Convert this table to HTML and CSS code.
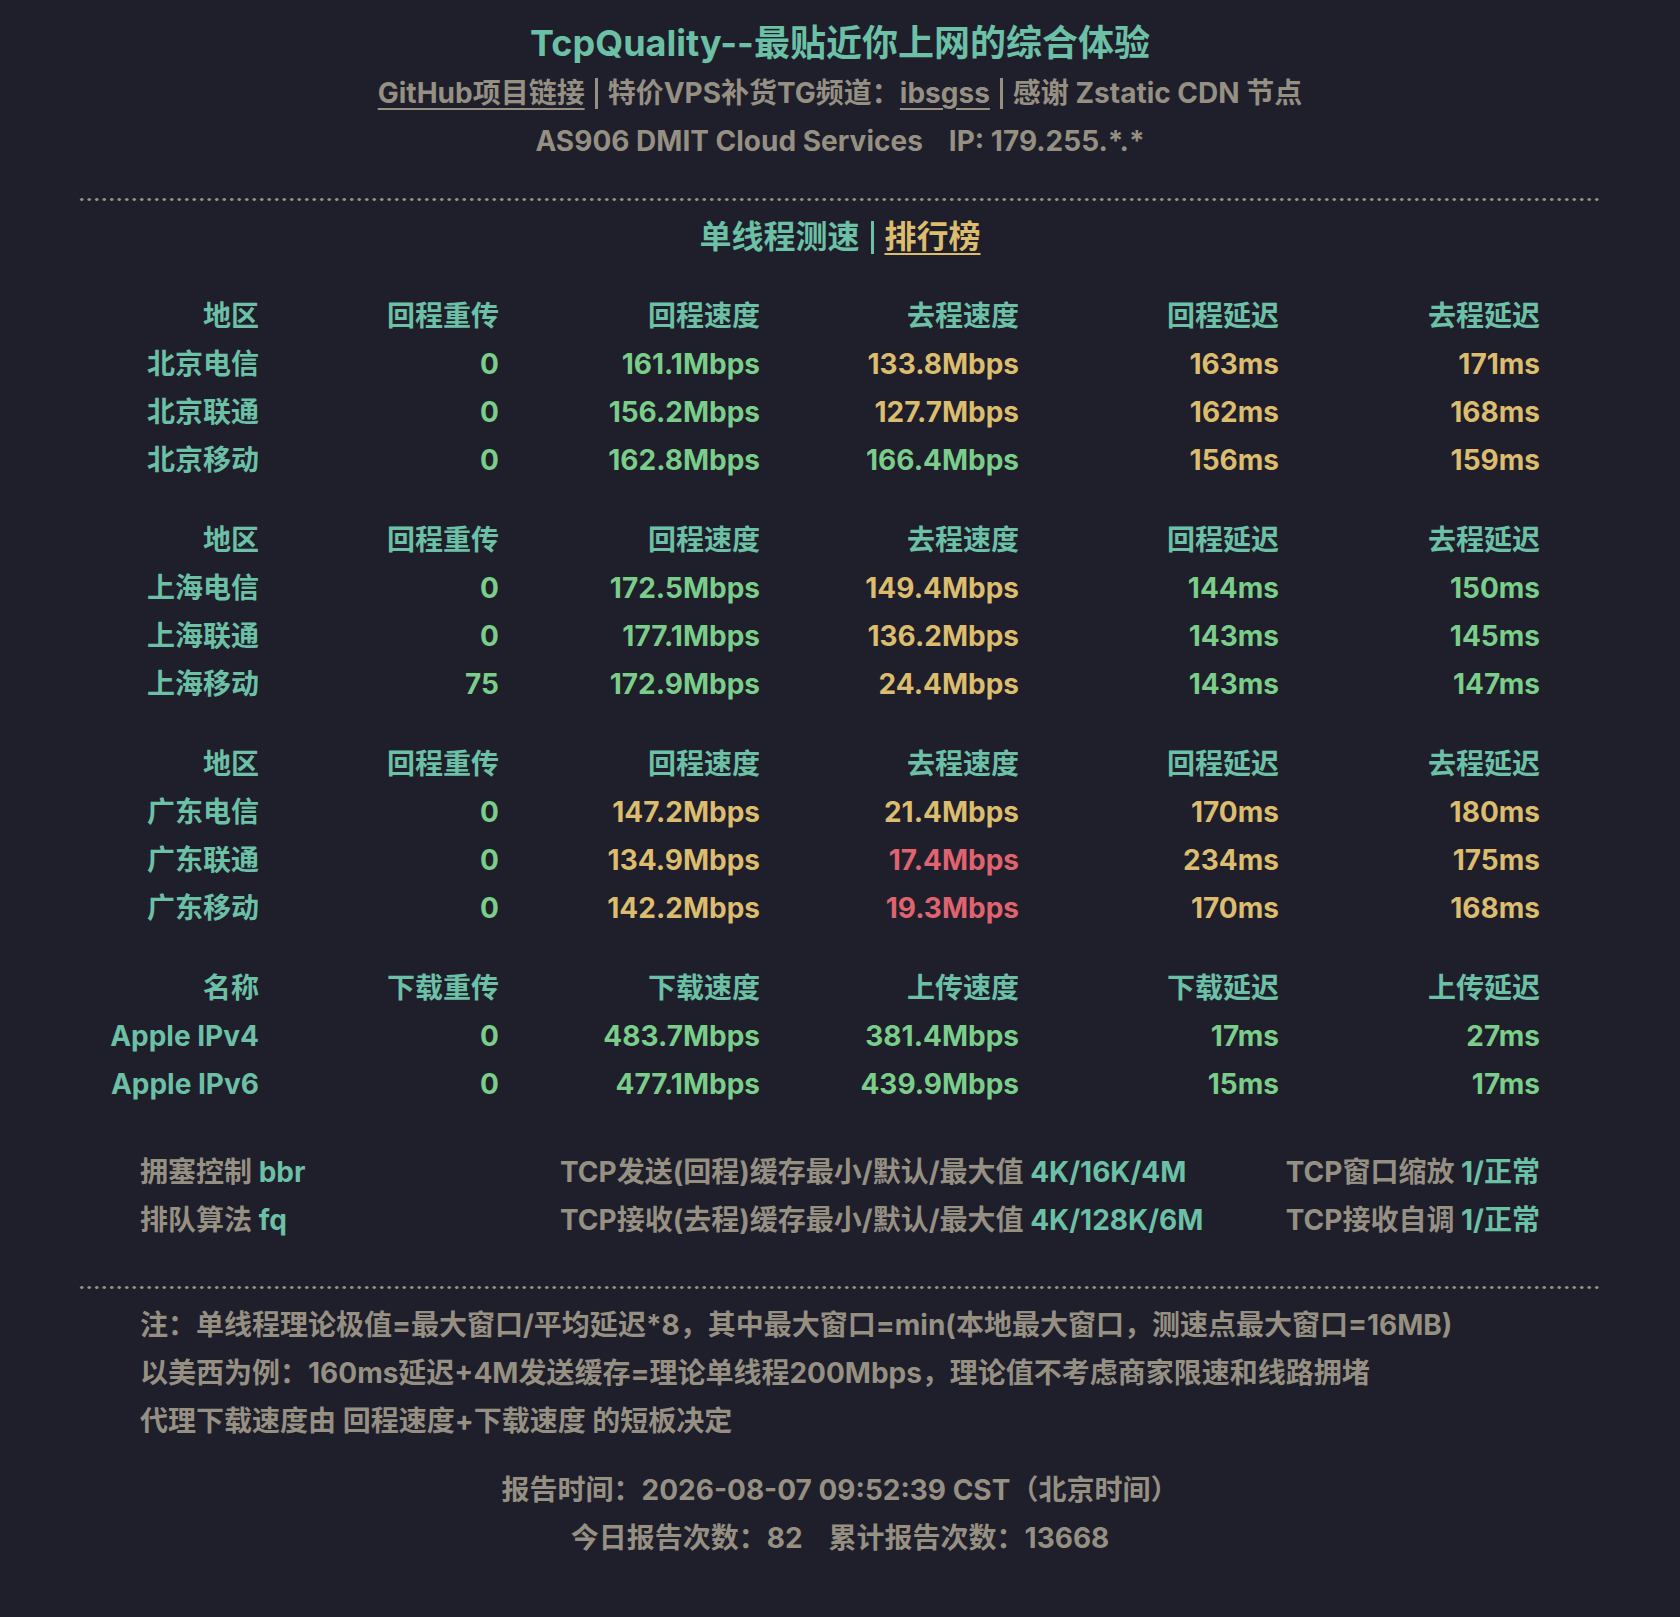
FILE: index.html
```html
<!DOCTYPE html>
<html lang="zh-CN">
<head>
<meta charset="utf-8">
<title>TcpQuality</title>
<link rel="stylesheet" href="styles.css">
</head>
<body>
<div class="page">
  <header class="head">
    <h1 class="title">TcpQuality--最贴近你上网的综合体验</h1>
    <div class="line"><a class="link" href="#">GitHub项目链接</a><span class="bar"></span>特价VPS补货TG频道：<a class="link" href="#">ibsgss</a><span class="bar"></span>感谢 Zstatic CDN 节点</div>
    <div class="line">AS906 DMIT Cloud Services<span class="sp"></span>IP: 179.255.*.*</div>
  </header>

  <div class="dots"></div>

  <div class="tabs"><span class="tab-on">单线程测速</span><span class="bar bar-teal"></span><a class="tab-link" href="#">排行榜</a></div>

  <section class="tables">
    <div class="grid">
      <div class="h">地区</div><div class="h">回程重传</div><div class="h">回程速度</div><div class="h">去程速度</div><div class="h">回程延迟</div><div class="h">去程延迟</div>
      <div class="h">北京电信</div><div class="g">0</div><div class="g">161.1Mbps</div><div class="y">133.8Mbps</div><div class="y">163ms</div><div class="y">171ms</div>
      <div class="h">北京联通</div><div class="g">0</div><div class="g">156.2Mbps</div><div class="y">127.7Mbps</div><div class="y">162ms</div><div class="y">168ms</div>
      <div class="h">北京移动</div><div class="g">0</div><div class="g">162.8Mbps</div><div class="g">166.4Mbps</div><div class="y">156ms</div><div class="y">159ms</div>
    </div>
    <div class="grid">
      <div class="h">地区</div><div class="h">回程重传</div><div class="h">回程速度</div><div class="h">去程速度</div><div class="h">回程延迟</div><div class="h">去程延迟</div>
      <div class="h">上海电信</div><div class="g">0</div><div class="g">172.5Mbps</div><div class="y">149.4Mbps</div><div class="g">144ms</div><div class="g">150ms</div>
      <div class="h">上海联通</div><div class="g">0</div><div class="g">177.1Mbps</div><div class="y">136.2Mbps</div><div class="g">143ms</div><div class="g">145ms</div>
      <div class="h">上海移动</div><div class="g">75</div><div class="g">172.9Mbps</div><div class="y">24.4Mbps</div><div class="g">143ms</div><div class="g">147ms</div>
    </div>
    <div class="grid">
      <div class="h">地区</div><div class="h">回程重传</div><div class="h">回程速度</div><div class="h">去程速度</div><div class="h">回程延迟</div><div class="h">去程延迟</div>
      <div class="h">广东电信</div><div class="g">0</div><div class="y">147.2Mbps</div><div class="y">21.4Mbps</div><div class="y">170ms</div><div class="y">180ms</div>
      <div class="h">广东联通</div><div class="g">0</div><div class="y">134.9Mbps</div><div class="r">17.4Mbps</div><div class="y">234ms</div><div class="y">175ms</div>
      <div class="h">广东移动</div><div class="g">0</div><div class="y">142.2Mbps</div><div class="r">19.3Mbps</div><div class="y">170ms</div><div class="y">168ms</div>
    </div>
    <div class="grid">
      <div class="h">名称</div><div class="h">下载重传</div><div class="h">下载速度</div><div class="h">上传速度</div><div class="h">下载延迟</div><div class="h">上传延迟</div>
      <div class="h">Apple IPv4</div><div class="g">0</div><div class="g">483.7Mbps</div><div class="g">381.4Mbps</div><div class="g">17ms</div><div class="g">27ms</div>
      <div class="h">Apple IPv6</div><div class="g">0</div><div class="g">477.1Mbps</div><div class="g">439.9Mbps</div><div class="g">15ms</div><div class="g">17ms</div>
    </div>
  </section>

  <section class="settings">
    <div>拥塞控制 <span class="t">bbr</span></div>
    <div>TCP发送(回程)缓存最小/默认/最大值 <span class="t">4K/16K/4M</span></div>
    <div class="rt">TCP窗口缩放 <span class="t">1/正常</span></div>
    <div>排队算法 <span class="t">fq</span></div>
    <div>TCP接收(去程)缓存最小/默认/最大值 <span class="t">4K/128K/6M</span></div>
    <div class="rt">TCP接收自调 <span class="t">1/正常</span></div>
  </section>

  <div class="dots dots-low"></div>

  <section class="notes">
    <div>注：单线程理论极值=最大窗口/平均延迟*8，其中最大窗口=min(本地最大窗口，测速点最大窗口=16MB)</div>
    <div>以美西为例：160ms延迟+4M发送缓存=理论单线程200Mbps，理论值不考虑商家限速和线路拥堵</div>
    <div>代理下载速度由 回程速度+下载速度 的短板决定</div>
  </section>

  <footer class="foot">
    <div>报告时间：2026-08-07 09:52:39 CST（北京时间）</div>
    <div>今日报告次数：82<span class="sp2"></span>累计报告次数：13668</div>
  </footer>
</div>
</body>
</html>
```

FILE: styles.css
```css
html, body {
  margin: 0;
  padding: 0;
  background: #1f1e2b;
}
body {
  font-family: Inter, "Noto Sans CJK SC", sans-serif;
  font-weight: 650;
  font-size: 28px;
  line-height: 48px;
  color: #969083;
}
.page {
  margin: 0 78px;
  padding: 17px 0 55px;
}
.head {
  text-align: center;
}
.title {
  margin: 0;
  font-size: 36px;
  line-height: 52px;
  font-weight: 650;
  color: #6cc0a5;
}
.line {
  line-height: 48px;
}
.link {
  color: #969083;
  text-decoration: underline;
  text-decoration-thickness: 2px;
  text-underline-offset: 5px;
}
.bar {
  display: inline-block;
  width: 3px;
  height: 31px;
  background: #969083;
  margin: 0 10px;
  vertical-align: -6px;
}
.bar-teal {
  background: #6cc0a5;
  height: 33px;
  margin: 0 11px;
}
.sp {
  display: inline-block;
  width: 26px;
}
.sp2 {
  display: inline-block;
  width: 26px;
}
.dots {
  height: 3px;
  margin-top: 33px;
  background-image: radial-gradient(circle, #958f83 1.5px, transparent 1.8px);
  background-size: 7.5px 3px;
  background-repeat: repeat-x;
}
.tabs {
  margin-top: 12px;
  text-align: center;
  font-size: 32px;
  line-height: 48px;
  color: #6cc0a5;
}
.tab-link {
  color: #dcbc6e;
  text-decoration: underline;
  text-decoration-thickness: 2px;
  text-underline-offset: 5px;
}
.tables {
  margin-top: 31px;
  display: flex;
  flex-direction: column;
  gap: 32px;
}
.grid {
  display: grid;
  grid-template-columns: 181px 240px 261px 259px 260px 261px;
  grid-auto-rows: 48px;
  text-align: right;
}
.h { color: #6cc0a5; }
.g { color: #7bcd8a; }
.y { color: #dcbc6e; }
.r { color: #e0646f; }
.t { color: #6cc0a5; }
.settings {
  margin-top: 40px;
  padding: 0 62px;
  display: grid;
  grid-template-columns: 420px 1fr auto;
  grid-auto-rows: 48px;
}
.rt {
  text-align: right;
}
.dots-low {
  margin-top: 42px;
}
.notes {
  margin-top: 12px;
  padding: 0 62px;
}
.foot {
  margin-top: 21px;
  text-align: center;
}
```
